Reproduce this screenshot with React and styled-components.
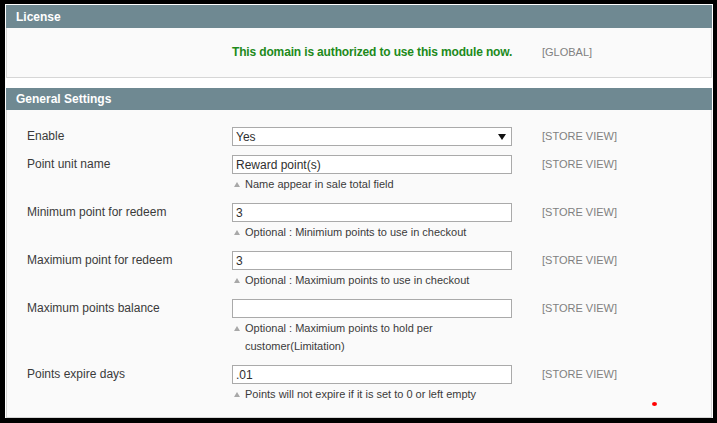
import styled, { createGlobalStyle } from "styled-components";

const GlobalStyle = createGlobalStyle`
  * {
    box-sizing: border-box;
  }

  body {
    margin: 0;
    background: #ffffff;
    font-family: "Liberation Sans", Arial, sans-serif;
  }
`;

const StyledFrame = styled.div`
  width: 717px;
  height: 423px;
  padding: 4px 4px 5px 5px;
  background: #000000;
  display: flex;
`;

const StyledPanel = styled.div`
  flex: 1;
  padding: 1px 1px 0 1px;
  background: #ffffff;
  display: flex;
  flex-direction: column;
  overflow: hidden;
`;

const StyledSectionHead = styled.div`
  height: ${({ $h }) => $h || 23}px;
  flex-shrink: 0;
  padding-left: 10px;
  display: flex;
  align-items: center;
  background: #6f8992;
  color: #ffffff;
  font-size: 12px;
  font-weight: 700;
`;

const StyledSectionBody = styled.div`
  position: relative;
  background: #fafafa;
  border: 1px solid #d6d6d6;
  border-top: 0;
  padding: ${({ $pad }) => $pad};
  flex: ${({ $grow }) => ($grow ? 1 : "none")};
  margin-bottom: ${({ $gap }) => $gap || 0}px;
`;

const StyledRow = styled.div`
  display: grid;
  grid-template-columns: 205px 280px 1fr;
  padding-left: 20px;
  padding-top: ${({ $top }) => ($top === undefined ? 9 : $top)}px;
  align-items: start;
`;

const StyledLabel = styled.div`
  font-size: 12px;
  line-height: 19px;
  color: #3a3a3a;
`;

const StyledScope = styled.div`
  padding-left: 30px;
  font-size: 11px;
  line-height: 19px;
  color: #808080;
  white-space: nowrap;
`;

const StyledLicense = styled.div`
  font-size: 12px;
  line-height: 19px;
  font-weight: 700;
  letter-spacing: -0.15px;
  white-space: nowrap;
  color: #218a1a;
`;

const StyledInput = styled.input`
  display: block;
  width: 280px;
  height: 19px;
  margin: 0;
  padding: 0 3px;
  border: 1px solid #aaaaaa;
  background: #ffffff;
  font-family: "Liberation Sans", Arial, sans-serif;
  font-size: 12px;
  color: #2f2f2f;
  outline: none;
`;

const StyledSelectWrap = styled.div`
  position: relative;
  width: 280px;
  height: 19px;
`;

const StyledSelect = styled.select`
  appearance: none;
  display: block;
  width: 100%;
  height: 19px;
  margin: 0;
  padding: 0 3px;
  border: 1px solid #aaaaaa;
  border-radius: 0;
  background: #ffffff;
  font-family: "Liberation Sans", Arial, sans-serif;
  font-size: 12px;
  color: #2f2f2f;
  outline: none;
`;

const StyledArrow = styled.span`
  position: absolute;
  right: 6px;
  top: 7px;
  width: 0;
  height: 0;
  border-left: 4px solid transparent;
  border-right: 4px solid transparent;
  border-top: 6px solid #111111;
  pointer-events: none;
`;

const StyledNote = styled.div`
  display: flex;
  align-items: flex-start;
  margin: 1px 0;
  font-size: 11px;
  line-height: 18px;
  color: #3a3a3a;
`;

const StyledNoteMark = styled.span`
  flex-shrink: 0;
  width: 0;
  height: 0;
  margin: 7px 5px 0 2px;
  border-left: 3px solid transparent;
  border-right: 3px solid transparent;
  border-bottom: 5px solid #a8a8a8;
`;

const StyledNoteText = styled.span`
  width: 255px;
`;

const StyledDot = styled.span`
  position: absolute;
  left: 645px;
  top: 292px;
  width: 5px;
  height: 4px;
  border-radius: 50%;
  background: #ff0000;
`;

const fields = [
  { label: "Point unit name", value: "Reward point(s)", note: "Name appear in sale total field" },
  { label: "Minimum point for redeem", value: "3", note: "Optional : Minimium points to use in checkout" },
  { label: "Maximium point for redeem", value: "3", note: "Optional : Maximium points to use in checkout" },
  {
    label: "Maximum points balance",
    value: "",
    note: "Optional : Maximium points to hold per customer(Limitation)",
  },
  { label: "Points expire days", value: ".01", note: "Points will not expire if it is set to 0 or left empty" },
];

function Note({ children }) {
  return (
    <StyledNote>
      <StyledNoteMark />
      <StyledNoteText>{children}</StyledNoteText>
    </StyledNote>
  );
}

export default function App() {
  return (
    <>
      <GlobalStyle />
      <StyledFrame>
        <StyledPanel>
          <StyledSectionHead>License</StyledSectionHead>
          <StyledSectionBody $pad="15px 0 15px 0" $gap={10}>
            <StyledRow $top={0}>
              <div />
              <StyledLicense>This domain is authorized to use this module now.</StyledLicense>
              <StyledScope>[GLOBAL]</StyledScope>
            </StyledRow>
          </StyledSectionBody>

          <StyledSectionHead $h={22}>General Settings</StyledSectionHead>
          <StyledSectionBody $pad="8px 0 0 0" $grow>
            <StyledRow>
              <StyledLabel>Enable</StyledLabel>
              <StyledSelectWrap>
                <StyledSelect defaultValue="1">
                  <option value="1">Yes</option>
                  <option value="0">No</option>
                </StyledSelect>
                <StyledArrow />
              </StyledSelectWrap>
              <StyledScope>[STORE VIEW]</StyledScope>
            </StyledRow>
            {fields.map((f) => (
              <StyledRow key={f.label}>
                <StyledLabel>{f.label}</StyledLabel>
                <div>
                  <StyledInput type="text" defaultValue={f.value} />
                  <Note>{f.note}</Note>
                </div>
                <StyledScope>[STORE VIEW]</StyledScope>
              </StyledRow>
            ))}
            <StyledDot />
          </StyledSectionBody>
        </StyledPanel>
      </StyledFrame>
    </>
  );
}
